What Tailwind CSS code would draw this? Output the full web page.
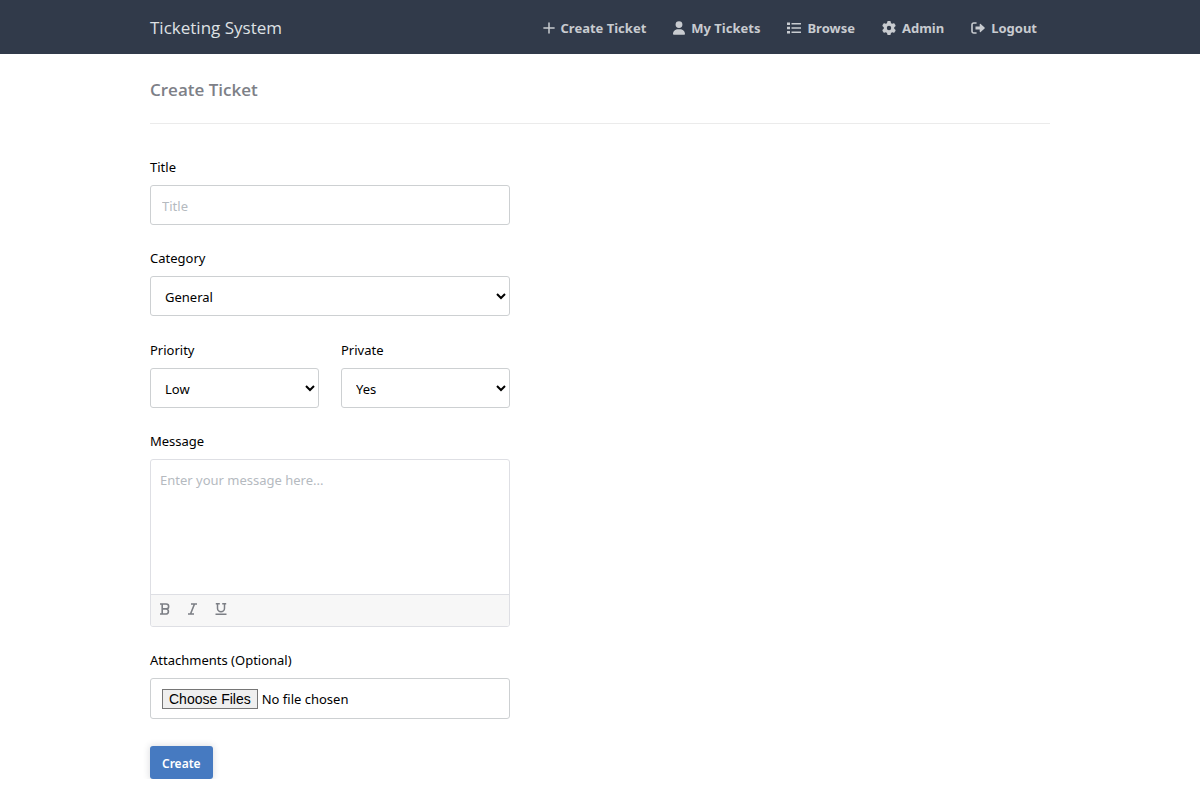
<!DOCTYPE html>
<html lang="en">
<head>
<meta charset="utf-8">
<meta name="viewport" content="width=device-width, initial-scale=1">
<title>Create Ticket - Ticketing System</title>
<script src="https://cdn.jsdelivr.net/npm/@tailwindcss/browser@4"></script>
</head>
<body class="bg-white font-['Segoe_UI','Noto_Sans',sans-serif] text-[13px] text-black">
<header class="bg-[#313a4a]">
  <div class="mx-auto flex h-[54px] max-w-[900px] items-center justify-between pt-[2px]">
    <a href="#" class="font-['Segoe_UI','Open_Sans',sans-serif] text-[17px] text-[#dfe1e4]">Ticketing System</a>
    <nav class="flex items-center gap-[27px] pt-px pr-[13px] text-[13px] font-bold text-[#c8cbd0]">
      <a href="#" class="flex items-center gap-[6px]">
        <svg class="-mt-[2px] size-3" viewBox="0 0 12 12" fill="none" stroke="currentColor" stroke-width="1.5" stroke-linecap="round"><path d="M6 .9v10.2M.9 6h10.2"/></svg>Create Ticket</a>
      <a href="#" class="flex items-center gap-[6px]">
        <svg class="-mt-[2px] h-[14px] w-3" viewBox="0 0 448 512" fill="currentColor"><path d="M224 256a128 128 0 1 0 0-256 128 128 0 1 0 0 256zm-45.700 48C79.800 304 0 383.800 0 482.300 0 498.700 13.300 512 29.700 512h388.600c16.400 0 29.700-13.300 29.700-29.700C448 383.800 368.200 304 269.700 304h-91.400z"/></svg>My Tickets</a>
      <a href="#" class="flex items-center gap-[6px]">
        <svg class="-mt-[2px] h-3 w-[14px]" viewBox="0 0 14 12" fill="currentColor"><path d="M0 .5h3v2.500H0zM0 4.700h3v2.500H0zM0 9h3v2.500H0zM4.500 1H14v1.500H4.500zM4.500 5.200H14v1.500H4.500zM4.500 9.500H14V11H4.500z"/></svg>Browse</a>
      <a href="#" class="flex items-center gap-[6px]">
        <svg class="-mt-[2px] size-[14px]" viewBox="0 0 512 512" fill="currentColor"><path d="M495.900 166.600c3.200 8.700 .5 18.400-6.400 24.600l-43.300 39.400c1.100 8.300 1.700 16.800 1.700 25.400s-.6 17.100-1.700 25.400l43.300 39.400c6.900 6.200 9.600 15.900 6.400 24.600-4.400 11.900-9.700 23.300-15.800 34.300l-4.700 8.100c-6.600 11-14 21.400-22.100 31.200-5.900 7.200-15.700 9.600-24.500 6.800l-55.700-17.700c-13.400 10.300-28.200 18.900-44 25.400l-12.500 57.100c-2 9.100-9 16.300-18.200 17.800-13.800 2.300-28 3.500-42.500 3.500s-28.700-1.200-42.500-3.500c-9.200-1.500-16.200-8.700-18.200-17.800l-12.500-57.100c-15.800-6.500-30.600-15.100-44-25.400L83.100 425.900c-8.800 2.800-18.600 .3-24.500-6.800-8.100-9.800-15.500-20.200-22.100-31.200l-4.700-8.100c-6.100-11-11.400-22.400-15.800-34.300-3.200-8.700-.5-18.400 6.400-24.600l43.300-39.400C64.600 273.100 64 264.600 64 256s.6-17.100 1.700-25.400L22.400 191.200c-6.900-6.200-9.600-15.900-6.400-24.600 4.400-11.900 9.700-23.300 15.800-34.300l4.700-8.100c6.600-11 14-21.400 22.100-31.200 5.900-7.200 15.700-9.600 24.500-6.800l55.700 17.700c13.400-10.300 28.200-18.900 44-25.400l12.500-57.100c2-9.100 9-16.300 18.200-17.800C227.300 1.200 241.500 0 256 0s28.700 1.200 42.500 3.500c9.200 1.500 16.200 8.700 18.200 17.800l12.500 57.100c15.800 6.500 30.600 15.100 44 25.400l55.700-17.700c8.800-2.800 18.600-.3 24.500 6.800 8.100 9.800 15.500 20.200 22.100 31.200l4.700 8.100c6.100 11 11.400 22.400 15.800 34.300zM256 336a80 80 0 1 0 0-160 80 80 0 1 0 0 160z"/></svg>Admin</a>
      <a href="#" class="flex items-center gap-[6px]">
        <svg class="-mt-[2px] size-[14px]" viewBox="0 0 14 14" fill="none"><path d="M5 2H2.700A1.700 1.700 0 0 0 1 3.700v6.600A1.700 1.700 0 0 0 2.700 12H5" stroke="currentColor" stroke-width="1.600" stroke-linecap="round"/><path d="M4.500 5.600h4.200V3.500c0-.6.600-.9 1-.5l3.900 3.500c.3.300.3.700 0 1L9.700 11c-.4.400-1 .1-1-.5V8.400H4.500z" fill="currentColor"/></svg>Logout</a>
    </nav>
  </div>
</header>
<main class="mx-auto max-w-[900px]">
  <h1 class="border-b border-[#ebebeb] pt-6 pb-[21px] font-['Segoe_UI','Open_Sans',sans-serif] text-[17px] leading-6 font-semibold text-[#7d8087]">Create Ticket</h1>
  <form class="mt-[33px] flex max-w-[360px] flex-col items-start gap-[23px]">
    <div class="flex w-full flex-col gap-2">
      <label for="title" class="leading-5">Title</label>
      <input id="title" type="text" placeholder="Title" class="h-10 w-full rounded-[3px] border border-[#cdd0d2] px-[11px] pt-[2px] placeholder:text-[#b5babf]">
    </div>
    <div class="mb-px flex w-full flex-col gap-2">
      <label for="category" class="leading-5">Category</label>
      <select id="category" class="h-10 w-full rounded-[3px] border border-[#cdd0d2] bg-white pt-[2px] pl-[10px]"><option>General</option></select>
    </div>
    <div class="grid w-full grid-cols-2 gap-[22px]">
      <div class="flex flex-col gap-2">
        <label for="priority" class="leading-5">Priority</label>
        <select id="priority" class="h-10 w-full rounded-[3px] border border-[#cdd0d2] bg-white pt-[2px] pl-[10px]"><option>Low</option></select>
      </div>
      <div class="flex flex-col gap-2">
        <label for="private" class="leading-5">Private</label>
        <select id="private" class="h-10 w-full rounded-[3px] border border-[#cdd0d2] bg-white pt-[2px] pl-[10px]"><option>Yes</option></select>
      </div>
    </div>
    <div class="flex w-full flex-col gap-2">
      <label for="message" class="leading-5">Message</label>
      <div class="overflow-hidden rounded-[3px] border border-[#dedfe4]">
        <textarea id="message" placeholder="Enter your message here..." class="block h-[134px] w-full resize-none px-[9px] py-[10px] leading-5 placeholder:text-[#b5babf]"></textarea>
        <div class="flex h-8 items-center gap-4 border-t border-[#dedfe4] bg-[#f7f7f7] px-2 pb-[3px] text-[#7c7f85]">
          <button type="button" aria-label="Bold"><svg class="size-3" viewBox="0 0 12 12" fill="none" stroke="currentColor" stroke-width="1.600"><path d="M1 1h6.200a2.400 2.400 0 0 1 0 4.900H3M7.300 5.900a2.600 2.600 0 0 1 0 5.100H1M3.200 1v10"/></svg></button>
          <button type="button" aria-label="Italic"><svg class="size-3" viewBox="0 0 12 12" fill="none" stroke="currentColor" stroke-width="1.600"><path d="M4 1h6M1 11h6M7.500 1l-4 10"/></svg></button>
          <button type="button" aria-label="Underline"><svg class="size-3" viewBox="0 0 12 12" fill="none" stroke="currentColor" stroke-width="1.500"><path d="M.8.800h4M7.200.800h4M2.500.800v4.400a3.500 3.500 0 0 0 7 0V.800M.5 11.200h11"/></svg></button>
        </div>
      </div>
    </div>
    <div class="flex w-full flex-col gap-2">
      <label for="files" class="leading-5">Attachments (Optional)</label>
      <input id="files" type="file" multiple class="h-[41px] w-full rounded-[3px] border border-[#cdd0d2] px-[11px] py-[10px] file:mr-1 file:h-5 file:border file:border-solid file:border-[#767676] file:bg-[#efefef] file:px-[6px] file:font-['Liberation_Sans',Arial,sans-serif] file:text-[14px] file:leading-none file:text-black">
    </div>
    <button type="submit" class="mt-1 h-[33px] rounded-[3px] bg-[#467ac1] px-3 pt-[2px] text-[12px] font-semibold text-white shadow-[0_0_6px_1px_rgba(45,57,68,0.15)]">Create</button>
  </form>
</main>
</body>
</html>
